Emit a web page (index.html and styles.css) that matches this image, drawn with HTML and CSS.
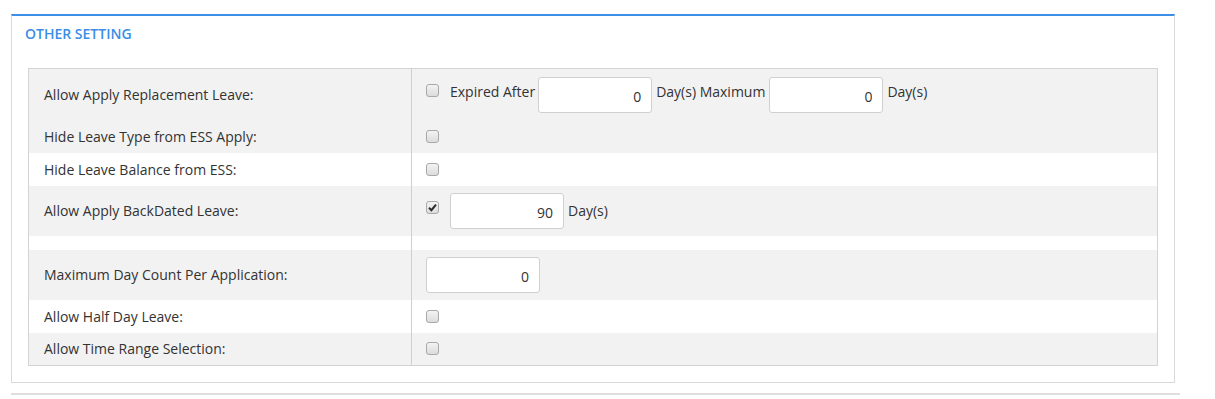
FILE: index.html
```html
<!DOCTYPE html>
<html lang="en">
<head>
  <meta charset="UTF-8">
  <title>Other Setting</title>
  <link rel="stylesheet" href="styles.css">
</head>
<body>
  <div class="panel">
    <h3 class="panel-title">OTHER SETTING</h3>

    <table class="setting-table">
      <colgroup>
        <col class="col-label">
        <col>
      </colgroup>
      <tr class="row-first grey">
        <td class="label">Allow Apply Replacement Leave:</td>
        <td>
          <div class="field">
            <span class="check top"></span>
            <span class="text top gap-big">Expired After</span>
            <input class="num gap-tight" type="text" value="0">
            <span class="text top gap-mid">Day(s) Maximum</span>
            <input class="num gap-small" type="text" value="0">
            <span class="text top gap-mid">Day(s)</span>
          </div>
        </td>
      </tr>
      <tr class="row-second grey">
        <td class="label">Hide Leave Type from ESS Apply:</td>
        <td><div class="field"><span class="check"></span></div></td>
      </tr>
      <tr class="row-short">
        <td class="label">Hide Leave Balance from ESS:</td>
        <td><div class="field"><span class="check"></span></div></td>
      </tr>
      <tr class="row-tall grey">
        <td class="label">Allow Apply BackDated Leave:</td>
        <td>
          <div class="field">
            <span class="check checked top-mid">
              <svg viewBox="0 0 13 13" width="13" height="13"><path d="M3 6.8 L5.4 9.2 L10 3.6" fill="none" stroke="#2b2b2b" stroke-width="2"/></svg>
            </span>
            <input class="num gap-big" type="text" value="90">
            <span class="text gap-small">Day(s)</span>
          </div>
        </td>
      </tr>
      <tr class="row-blank">
        <td></td>
        <td></td>
      </tr>
      <tr class="row-tall grey">
        <td class="label">Maximum Day Count Per Application:</td>
        <td><div class="field"><input class="num" type="text" value="0"></div></td>
      </tr>
      <tr class="row-short">
        <td class="label">Allow Half Day Leave:</td>
        <td><div class="field"><span class="check"></span></div></td>
      </tr>
      <tr class="row-short grey">
        <td class="label">Allow Time Range Selection:</td>
        <td><div class="field"><span class="check"></span></div></td>
      </tr>
    </table>
  </div>

  <div class="next-panel"></div>
</body>
</html>
```

FILE: styles.css
```css
body {
  margin: 0;
  padding: 14px 0 0 11px;
  background: #fff;
  color: #333;
  font-family: 'Open Sans', sans-serif;
  font-size: 14px;
}

.panel {
  width: 1164px;
  box-sizing: border-box;
  border: 1px solid #d9d9d9;
  border-top: 2px solid #3c8ee6;
  padding: 8px 16px 16px 13px;
}

.panel-title {
  margin: 0 0 24px 0;
  font-size: 14px;
  line-height: 20px;
  font-weight: 600;
  color: #3a8ee6;
}

.setting-table {
  width: 1130px;
  margin-left: 3px;
  border-collapse: collapse;
  border: 1px solid #d3d3d3;
}

.col-label {
  width: 383px;
}

.setting-table td {
  padding: 0;
  vertical-align: middle;
}

.setting-table td.label {
  padding-left: 15px;
  border-right: 1px solid #cfcfcf;
}

.setting-table td + td {
  border-left: 1px solid #cfcfcf;
  padding-left: 14px;
}

.grey {
  background: #f2f2f2;
}

.row-first { height: 52px; }
.row-second { height: 32px; }
.row-short { height: 33px; }
.row-tall { height: 50px; }
.row-blank { height: 14px; }

.field {
  display: flex;
  align-items: center;
}

.check {
  display: inline-block;
  width: 13px;
  height: 13px;
  box-sizing: border-box;
  border: 1px solid #a9a9a9;
  border-radius: 3px;
  background: linear-gradient(#f3f3f3, #dcdcdc);
  flex-shrink: 0;
}

.check svg {
  display: block;
  margin: -1px;
}

.check.top {
  align-self: flex-start;
  margin-top: 7px;
}

.check.top-mid {
  align-self: flex-start;
  margin-top: 8px;
}

.text {
  line-height: 19px;
  white-space: nowrap;
}

.text.top {
  align-self: flex-start;
  margin-top: 5px;
}

.num {
  width: 114px;
  height: 36px;
  box-sizing: border-box;
  border: 1px solid #d0d0d0;
  border-radius: 3px;
  background: #fff;
  text-align: right;
  padding: 4px 10px 0 6px;
  font-family: 'Open Sans', sans-serif;
  font-size: 14px;
  color: #333;
}

.gap-big { margin-left: 11px; }
.gap-mid { margin-left: 4px; }
.gap-small { margin-left: 4px; }
.gap-tight { margin-left: 3px; }

.next-panel {
  width: 1169px;
  margin-top: 10px;
  border-top: 2px solid #dedede;
}
```
